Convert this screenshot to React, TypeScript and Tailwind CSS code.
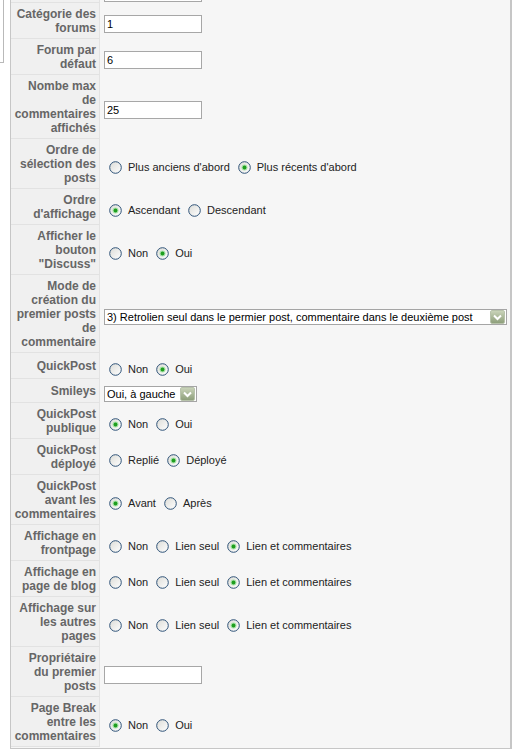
import React from 'react';

type Row =
  | { label: string; kind: 'text'; value: string }
  | { label: string; kind: 'radio'; options: string[]; checked: number }
  | { label: string; kind: 'select'; value: string; width: string };

const rows: Row[] = [
  { label: 'Catégorie des forums', kind: 'text', value: '1' },
  { label: 'Forum par défaut', kind: 'text', value: '6' },
  { label: 'Nombe max de commentaires affichés', kind: 'text', value: '25' },
  { label: 'Ordre de sélection des posts', kind: 'radio', options: ["Plus anciens d'abord", "Plus récents d'abord"], checked: 1 },
  { label: "Ordre d'affichage", kind: 'radio', options: ['Ascendant', 'Descendant'], checked: 0 },
  { label: 'Afficher le bouton "Discuss"', kind: 'radio', options: ['Non', 'Oui'], checked: 1 },
  {
    label: 'Mode de création du premier posts de commentaire',
    kind: 'select',
    value: '3) Retrolien seul dans le permier post, commentaire dans le deuxième post',
    width: 'w-[403px]',
  },
  { label: 'QuickPost', kind: 'radio', options: ['Non', 'Oui'], checked: 1 },
  { label: 'Smileys', kind: 'select', value: 'Oui, à gauche', width: 'w-[93px]' },
  { label: 'QuickPost publique', kind: 'radio', options: ['Non', 'Oui'], checked: 0 },
  { label: 'QuickPost déployé', kind: 'radio', options: ['Replié', 'Déployé'], checked: 1 },
  { label: 'QuickPost avant les commentaires', kind: 'radio', options: ['Avant', 'Après'], checked: 0 },
  { label: 'Affichage en frontpage', kind: 'radio', options: ['Non', 'Lien seul', 'Lien et commentaires'], checked: 2 },
  { label: 'Affichage en page de blog', kind: 'radio', options: ['Non', 'Lien seul', 'Lien et commentaires'], checked: 2 },
  { label: 'Affichage sur les autres pages', kind: 'radio', options: ['Non', 'Lien seul', 'Lien et commentaires'], checked: 2 },
  { label: 'Propriétaire du premier posts', kind: 'text', value: '' },
  { label: 'Page Break entre les commentaires', kind: 'radio', options: ['Non', 'Oui'], checked: 0 },
];

const Radio = ({ checked }: { checked: boolean }) => (
  <svg width="13" height="13" viewBox="0 0 13 13" className="shrink-0">
    <defs>
      <linearGradient id="radioFill" x1="0" y1="0" x2="1" y2="1">
        <stop offset="0" stopColor="#dcdcd7" />
        <stop offset="1" stopColor="#ffffff" />
      </linearGradient>
    </defs>
    <circle cx="6.5" cy="6.5" r="5.8" fill="url(#radioFill)" stroke="#2f5378" strokeWidth="1" />
    {checked && (
      <>
        <circle cx="6.5" cy="6.5" r="3" fill="#a9e2a9" />
        <circle cx="6.5" cy="6.5" r="1.9" fill="#1f9e1f" />
      </>
    )}
  </svg>
);

const DropArrow = () => (
  <span className="flex h-[14px] w-[15px] shrink-0 items-center justify-center rounded-[2px] border border-[#b7c2aa] bg-gradient-to-b from-[#c9d3b9] to-[#8e9f7b]">
    <svg width="9" height="7" viewBox="0 0 9 7">
      <path d="M1 1.5 L4.5 5 L8 1.5" fill="none" stroke="#ffffff" strokeWidth="2" />
    </svg>
  </span>
);

const Value = ({ row }: { row: Row }) => {
  if (row.kind === 'text') {
    return (
      <div className="flex h-[18px] w-[98px] items-center border border-[#a7a7a7] bg-white pl-[2px] text-[11px] text-black">
        {row.value}
      </div>
    );
  }
  if (row.kind === 'select') {
    return (
      <div className={`flex h-[16px] items-center justify-between border border-[#a5a5a5] bg-white pl-[2px] pr-px text-[11px] text-black ${row.width}`}>
        <span className="truncate">{row.value}</span>
        <DropArrow />
      </div>
    );
  }
  return (
    <div className="flex h-[18px] items-center text-[11px] text-[#222]">
      {row.options.map((opt, i) => (
        <span key={i} className="flex items-center">
          <span className="ml-[5px]">
            <Radio checked={i === row.checked} />
          </span>
          <span className="ml-[6px] mr-[3px] whitespace-nowrap">{opt}</span>
        </span>
      ))}
    </div>
  );
};

export default function App() {
  return (
    <div className="flex h-[752px] w-[520px] overflow-hidden bg-white font-[Liberation_Sans,Arial,sans-serif]">
      {/* left pane edge */}
      <div className="w-[10px] shrink-0">
        <div className="h-[63px] w-[4px] border-b border-r border-[#b9b9b9]" />
      </div>

      {/* parameter panel */}
      <div className="flex h-[749px] w-[502px] shrink-0 flex-col border-b border-l border-r-2 border-[#c6c6c6] bg-[#f6f6f6]">
        {/* cut-off row above */}
        <div className="grid h-[3px] shrink-0 grid-cols-[89px_1fr]">
          <div className="border-b border-r border-[#e2e2e2] bg-[#f0f0f0]" />
          <div className="pl-[4px]">
            <div className="h-[2px] w-[98px] border-x border-b border-[#a7a7a7] bg-white" />
          </div>
        </div>

        <div className="grid grid-cols-[89px_1fr]">
          {rows.map((row, i) => (
            <React.Fragment key={i}>
              <div className="flex items-center justify-end border-b border-r border-[#e2e2e2] bg-[#f0f0f0] px-[3px] pb-[3px] pt-[4px] text-right text-[12px] font-bold leading-[14px] text-[#666]">
                {row.label}
              </div>
              <div className="flex items-center pb-px pl-[4px] pt-[7px]">
                <Value row={row} />
              </div>
            </React.Fragment>
          ))}
        </div>
      </div>
    </div>
  );
}
